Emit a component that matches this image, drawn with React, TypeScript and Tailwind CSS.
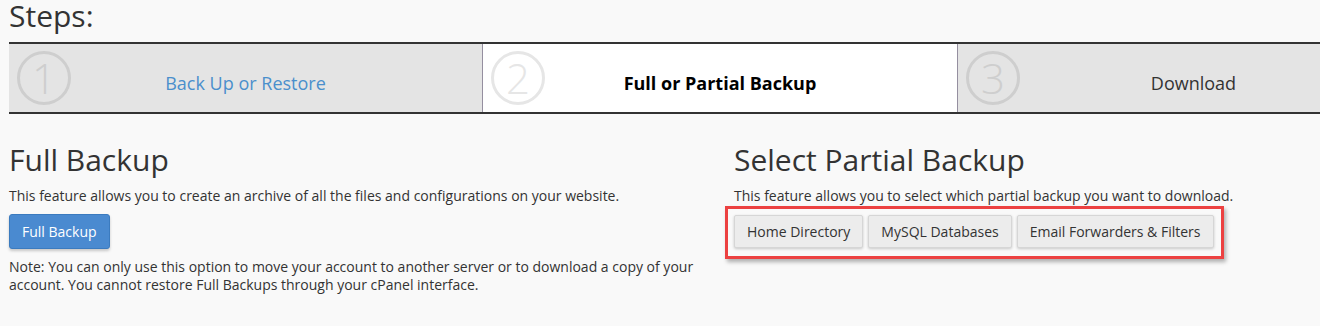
import React from 'react'

const font = { fontFamily: '"Open Sans", "Liberation Sans", sans-serif' }

interface Step {
  num: string
  label: string
  state: 'done' | 'current' | 'next'
}

const steps: Step[] = [
  { num: '1', label: 'Back Up or Restore', state: 'done' },
  { num: '2', label: 'Full or Partial Backup', state: 'current' },
  { num: '3', label: 'Download', state: 'next' },
]

function StepBadge({ num, light }: { num: string; light: boolean }) {
  return (
    <div
      className={
        'absolute left-[8px] top-[7px] w-[54px] h-[54px] rounded-full border-[3.5px] flex items-center justify-center text-[42px] font-light leading-[54px] ' +
        (light ? 'border-[#e6e6e6] text-[#e6e6e6]' : 'border-[#cecece] text-[#cecece]')
      }
    >
      {num}
    </div>
  )
}

export default function App() {
  return (
    <div className="w-full h-[326px] overflow-hidden bg-[#f9f9f9] text-[#333]" style={font}>
      <h2 className="pl-[9px] pt-[1px] text-[30px] leading-[30px] font-normal">Steps:</h2>

      <div className="ml-[9px] mt-[11px] w-[1420px] grid grid-cols-[473px_475px_472px] border-y-2 border-[#333] bg-[#e4e4e4]">
        {steps.map((s, i) => (
          <div
            key={s.num}
            className={
              'relative h-[68px] flex items-center justify-center pt-[10px] ' +
              (i > 0 ? 'border-l border-[#958fa0] ' : '') +
              (s.state === 'current' ? 'bg-white' : '')
            }
          >
            <StepBadge num={s.num} light={s.state === 'current'} />
            <span
              className={
                s.state === 'done'
                  ? 'text-[18px] text-[#4a8fcc]'
                  : s.state === 'current'
                  ? 'text-[18px] font-bold text-black'
                  : 'text-[18px] text-[#333]'
              }
            >
              {s.label}
            </span>
          </div>
        ))}
      </div>

      <div className="grid grid-cols-[725px_1fr] pl-[9px] mt-[29px]">
        <div>
          <h3 className="text-[30px] leading-[33px] font-normal">Full Backup</h3>
          <p className="mt-[10px] text-[14px] leading-[20px]">
            This feature allows you to create an archive of all the files and configurations on your website.
          </p>
          <button className="mt-[8px] h-[35px] px-[12px] rounded-[3px] border border-[#3b7bbf] bg-[#4a8ad0] text-white text-[14px] shadow-[0_2px_3px_rgba(0,0,0,0.2)]">
            Full Backup
          </button>
          <p className="mt-[9px] text-[14px] leading-[18px]">
            Note: You can only use this option to move your account to another server or to download a copy of your
            account. You cannot restore Full Backups through your cPanel interface.
          </p>
        </div>

        <div>
          <h3 className="text-[30px] leading-[33px] font-normal">Select Partial Backup</h3>
          <p className="mt-[10px] text-[14px] leading-[20px]">
            This feature allows you to select which partial backup you want to download.
          </p>
          <div className="-ml-[9px] inline-flex gap-[5px] border-[3px] border-[#ec4141] pl-[6px] pr-[7px] pt-[6px] pb-[8px] shadow-[2px_3px_4px_rgba(0,0,0,0.3)]">
            {['Home Directory', 'MySQL Databases', 'Email Forwarders & Filters'].map((b) => (
              <button
                key={b}
                className="h-[33px] px-[12px] rounded-[2px] border border-[#d6d6d6] bg-[#ececec] text-[14px] text-[#333] shadow-[0_1px_3px_rgba(0,0,0,0.2)]"
              >
                {b}
              </button>
            ))}
          </div>
        </div>
      </div>
    </div>
  )
}
